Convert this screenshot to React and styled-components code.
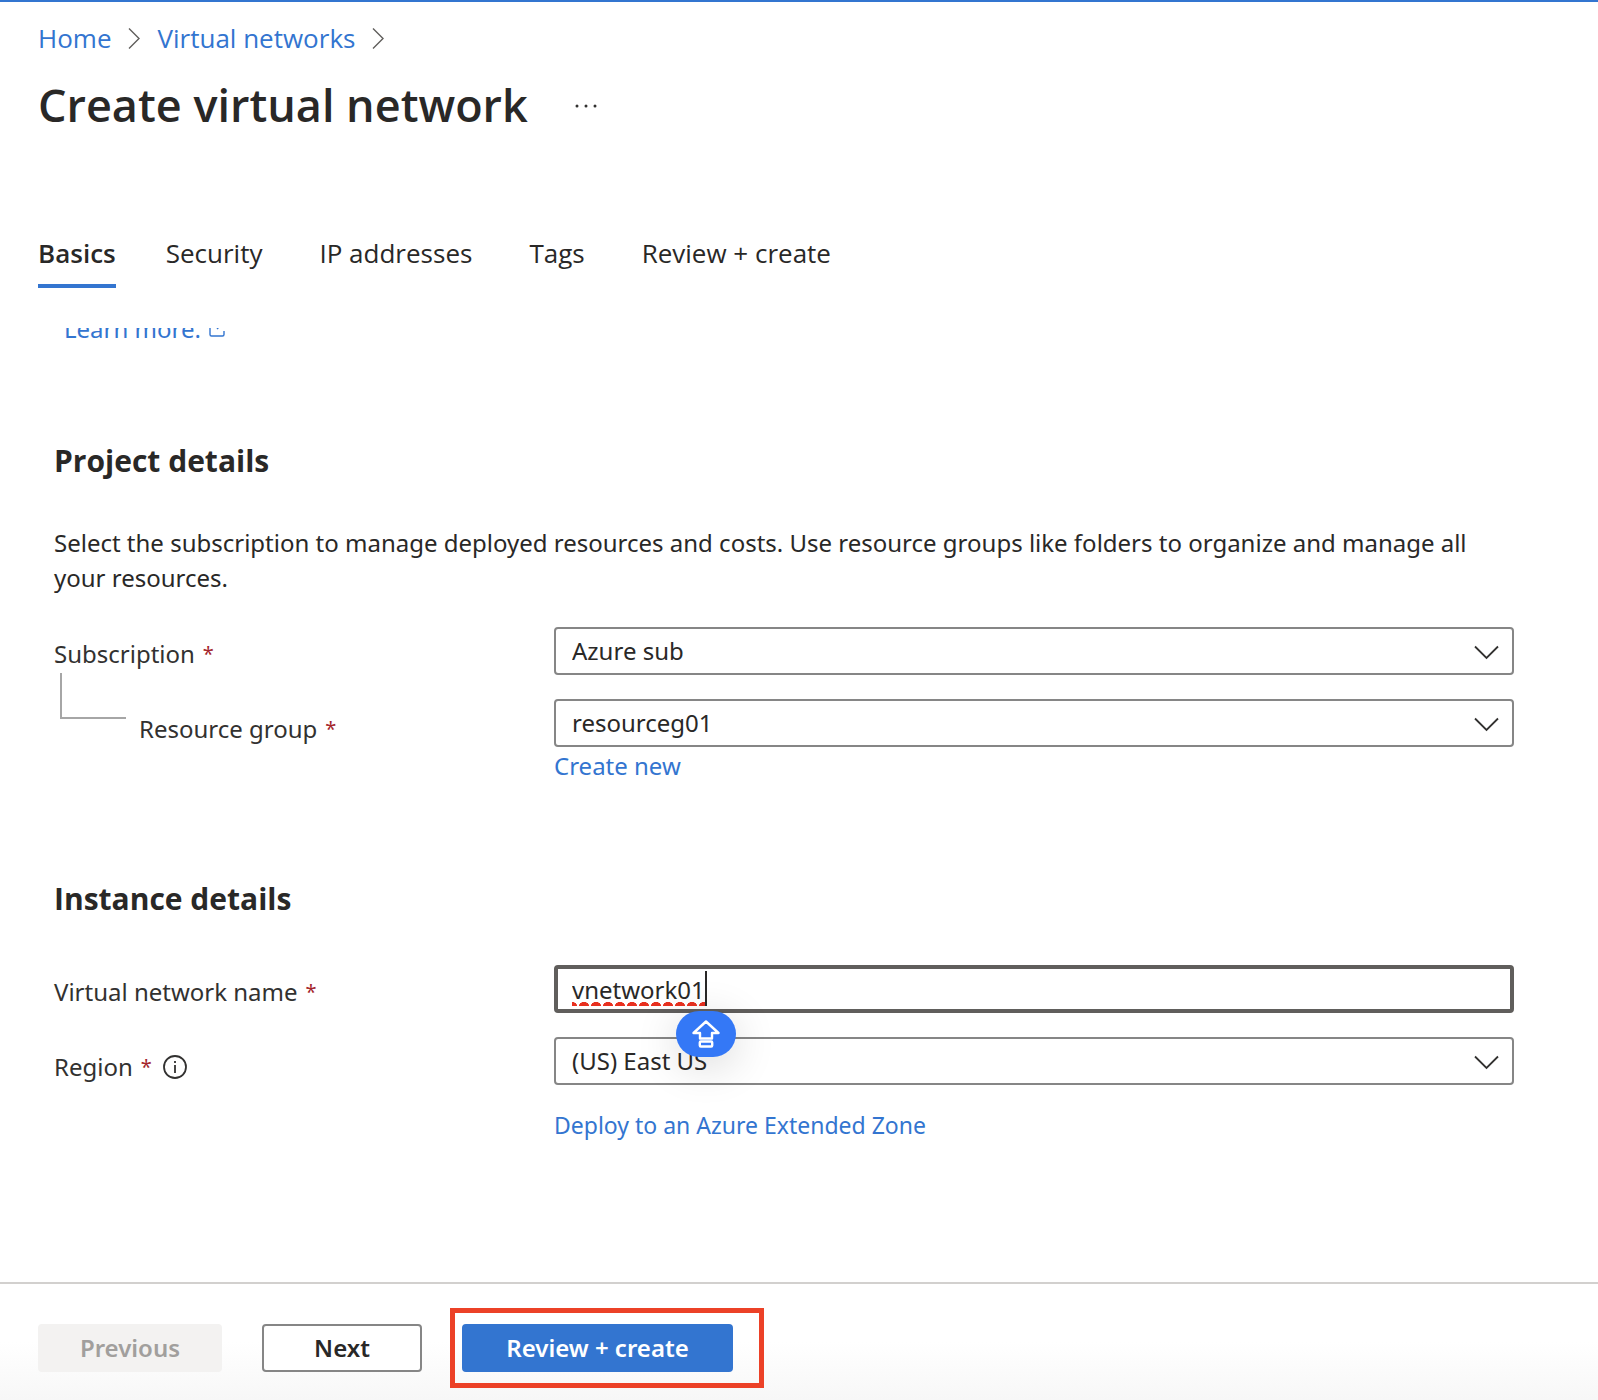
import React from "react";
import styled, { createGlobalStyle } from "styled-components";

const color = {
  link: "#3375d0",
  text: "#292827",
  label: "#323130",
  required: "#a4262c",
  border: "#868686",
};

const GlobalStyle = createGlobalStyle`
  * { box-sizing: border-box; }
  body {
    margin: 0;
    background: #fff;
    color: ${color.text};
    font: 24px/34px "Noto Sans", "Open Sans", sans-serif;
  }
`;

const Page = styled.div`
  min-height: 100vh;
  display: flex;
  flex-direction: column;
  border-top: 2px solid ${color.link};
`;

const Header = styled.header`
  padding: 18px 38px 0;
  font-family: "Open Sans", sans-serif;
`;

const Breadcrumb = styled.nav`
  display: flex;
  align-items: center;
  gap: 17px;
  font-size: 26px;
  line-height: 36px;
`;

const Link = styled.a`
  color: ${color.link};
  text-decoration: none;
`;

const TitleRow = styled.div`
  display: flex;
  align-items: center;
  gap: 45px;
  margin-top: 17px;
`;

const Title = styled.h1`
  margin: 0;
  font-size: 45px;
  line-height: 64px;
  font-weight: 600;
`;

const MoreButton = styled.button`
  padding: 0;
  border: 0;
  background: none;
  display: flex;
`;

const Tabs = styled.div`
  display: flex;
  gap: 50px;
  margin-top: 93px;
`;

const Tab = styled.button`
  height: 58px;
  padding: 0 ${(p) => (p.$active ? 0 : 7)}px 8px 0;
  border: 0;
  border-bottom: 4px solid ${(p) => (p.$active ? color.link : "transparent")};
  background: none;
  color: ${color.text};
  font: inherit;
  font-size: 26px;
  font-weight: ${(p) => (p.$active ? 600 : 400)};
`;

const Scroller = styled.main`
  flex: 1;
  margin-top: 40px;
  padding: 0 84px 0 54px;
  overflow: hidden;
`;

const LearnMore = styled.div`
  display: flex;
  align-items: center;
  gap: 8px;
  margin-top: -16px;
  padding-left: 10px;
`;

const Section = styled.section`
  margin-top: ${(p) => p.$top}px;
`;

const SectionTitle = styled.h2`
  margin: 0;
  font-family: "Open Sans", sans-serif;
  font-size: 30px;
  line-height: 44px;
  font-weight: 700;
`;

const Description = styled.p`
  margin: 42px 0 32px;
  line-height: 35px;
`;

const Fields = styled.div`
  display: flex;
  flex-direction: column;
  gap: 24px;
  margin-top: ${(p) => p.$top || 0}px;
`;

const Field = styled.div`
  display: grid;
  grid-template-columns: 500px 1fr;
`;

const LabelCell = styled.div`
  display: flex;
  align-items: center;
  gap: 11px;
  height: 48px;
  padding-top: ${(p) => (p.$low ? 11 : 5)}px;
  color: ${color.label};
`;

const Required = styled.span`
  margin-left: 8px;
  font-size: 20px;
  line-height: 20px;
  vertical-align: 2px;
  color: ${color.required};
`;

const Elbow = styled.span`
  align-self: flex-end;
  width: 66px;
  height: 46px;
  margin: 0 2px 28px 6px;
  flex: none;
  border: solid #a6a6a6;
  border-width: 0 0 2px 2px;
`;

const Control = styled.div`
  position: relative;
`;

const Select = styled.select`
  display: block;
  appearance: none;
  width: 100%;
  height: 48px;
  padding: 0 60px 0 16px;
  border: 2px solid ${color.border};
  border-radius: 4px;
  background: #fff;
  color: ${color.text};
  font: inherit;
`;

const TextInput = styled.input`
  display: block;
  width: 100%;
  height: 48px;
  padding: 0 14px;
  border: 4px solid #605e5c;
  border-radius: 4px;
  outline: 0;
  background: #fff;
  color: ${color.text};
  font: inherit;
`;

const SelectArrow = styled.svg`
  position: absolute;
  top: 18px;
  right: 15px;
  pointer-events: none;
`;

const Squiggle = styled.span`
  position: absolute;
  left: 18px;
  top: 37px;
  width: 134px;
  height: 4px;
  background: radial-gradient(ellipse 5px 4px at 50% 100%, #e8301f 95%, transparent 105%) -6px 0 / 12px 4px repeat-x;
`;

const Caret = styled.span`
  position: absolute;
  left: 151px;
  top: 6px;
  width: 2px;
  height: 35px;
  background: #292827;
`;

const CapsBadge = styled.span`
  position: absolute;
  z-index: 1;
  left: 122px;
  top: 46px;
  width: 60px;
  height: 46px;
  display: grid;
  place-items: center;
  border-radius: 23px;
  background: #3478f6;
  box-shadow: 0 8px 44px rgba(0, 0, 0, 0.16);
`;

const SubLink = styled(Link)`
  display: inline-block;
  margin-top: ${(p) => p.$top}px;
  font-size: ${(p) => p.$size || 24}px;
`;

const Footer = styled.footer`
  display: flex;
  gap: 40px;
  padding: 24px 38px 12px;
  border-top: 2px solid #d2d0ce;
  background: linear-gradient(#fff 50%, #f7f7f7);
`;

const Button = styled.button`
  align-self: center;
  width: ${(p) => p.$width}px;
  height: 48px;
  padding: 0 0 1px;
  border: 2px solid ${(p) => p.$border};
  border-radius: 4px;
  background: ${(p) => p.$fill};
  color: ${(p) => p.$ink};
  font: inherit;
  font-weight: 600;
`;

const Highlight = styled.div`
  margin-left: -12px;
  padding: 11px 26px 11px 7px;
  border: 5px solid #ec4127;
`;

const Crumb = () => (
  <svg width="12" height="22" viewBox="0 0 12 22" fill="none" stroke="#605e5c" strokeWidth="1.4" aria-hidden="true">
    <path d="M1 1.5L11 11.5L1 21.5" />
  </svg>
);

const Arrow = () => (
  <SelectArrow width="25" height="15" viewBox="0 0 25 15" fill="none" stroke="#323130" strokeWidth="1.8" aria-hidden="true">
    <path d="M1 1.5L12.5 13L24 1.5" />
  </SelectArrow>
);

function Dropdown({ id, value }) {
  return (
    <Control>
      <Select id={id} defaultValue={value}>
        <option>{value}</option>
      </Select>
      <Arrow />
    </Control>
  );
}

function FieldLabel({ id, children }) {
  return (
    <label htmlFor={id}>
      {children}
      <Required>*</Required>
    </label>
  );
}

const tabs = ["Basics", "Security", "IP addresses", "Tags", "Review + create"];

export default function App() {
  return (
    <Page>
      <GlobalStyle />
      <Header>
        <Breadcrumb aria-label="Breadcrumb">
          <Link href="#home">Home</Link>
          <Crumb />
          <Link href="#networks">Virtual networks</Link>
          <Crumb />
        </Breadcrumb>
        <TitleRow>
          <Title>Create virtual network</Title>
          <MoreButton aria-label="More actions">
            <svg width="28" height="6" viewBox="0 0 28 6" fill="#323130">
              <circle cx="4" cy="4" r="1.5" />
              <circle cx="13" cy="4" r="1.5" />
              <circle cx="22" cy="4" r="1.5" />
            </svg>
          </MoreButton>
        </TitleRow>
        <Tabs role="tablist">
          {tabs.map((name, i) => (
            <Tab key={name} role="tab" aria-selected={i === 0} $active={i === 0}>
              {name}
            </Tab>
          ))}
        </Tabs>
      </Header>

      <Scroller>
        <LearnMore>
          <Link href="#learn">Learn more.</Link>
          <svg width="16" height="16" viewBox="0 0 16 16" fill="none" stroke={color.link} strokeWidth="1.4" aria-hidden="true">
            <path d="M6 1H2.5Q1 1 1 2.5V13.5Q1 15 2.5 15H13.5Q15 15 15 13.5V10M9.5 1H15V6.5M15 1L8 8" />
          </svg>
        </LearnMore>

        <Section $top={93}>
          <SectionTitle>Project details</SectionTitle>
          <Description>
            Select the subscription to manage deployed resources and costs. Use resource groups like
            folders to organize and manage all your resources.
          </Description>
          <Fields>
            <Field>
              <LabelCell>
                <FieldLabel id="subscription">Subscription</FieldLabel>
              </LabelCell>
              <Dropdown id="subscription" value="Azure sub" />
            </Field>
            <Field>
              <LabelCell $low>
                <Elbow />
                <FieldLabel id="group">Resource group</FieldLabel>
              </LabelCell>
              <div>
                <Dropdown id="group" value="resourceg01" />
                <SubLink href="#new" $top={2}>Create new</SubLink>
              </div>
            </Field>
          </Fields>
        </Section>

        <Section $top={94}>
          <SectionTitle>Instance details</SectionTitle>
          <Fields $top={44}>
            <Field>
              <LabelCell>
                <FieldLabel id="name">Virtual network name</FieldLabel>
              </LabelCell>
              <Control>
                <TextInput id="name" type="text" defaultValue="vnetwork01" spellCheck={false} />
                <Squiggle />
                <Caret />
                <CapsBadge>
                  <svg width="28" height="28" viewBox="0 0 28 28" fill="none" stroke="#fff" strokeWidth="2.4" strokeLinejoin="round" aria-hidden="true">
                    <path d="M14 1.5L26.5 13H20V18.5H8V13H1.5Z" />
                    <rect x="7.8" y="21.5" width="12.4" height="5" rx="1" />
                  </svg>
                </CapsBadge>
              </Control>
            </Field>
            <Field>
              <LabelCell $low>
                <FieldLabel id="region">Region</FieldLabel>
                <svg width="24" height="24" viewBox="0 0 24 24" fill="none" stroke="#323130" strokeWidth="1.8" role="img" aria-label="Info">
                  <circle cx="12" cy="12" r="11" />
                  <path d="M12 10V18M12 6V8" />
                </svg>
              </LabelCell>
              <div>
                <Dropdown id="region" value="(US) East US" />
                <SubLink href="#zone" $top={23} $size={23}>Deploy to an Azure Extended Zone</SubLink>
              </div>
            </Field>
          </Fields>
        </Section>
      </Scroller>

      <Footer>
        <Button disabled $width={184} $border="#f3f2f1" $fill="#f3f2f1" $ink="#a19f9d">Previous</Button>
        <Button $width={160} $border={color.border} $fill="#fff" $ink={color.text}>Next</Button>
        <Highlight>
          <Button $width={271} $border={color.link} $fill={color.link} $ink="#fff">Review + create</Button>
        </Highlight>
      </Footer>
    </Page>
  );
}
